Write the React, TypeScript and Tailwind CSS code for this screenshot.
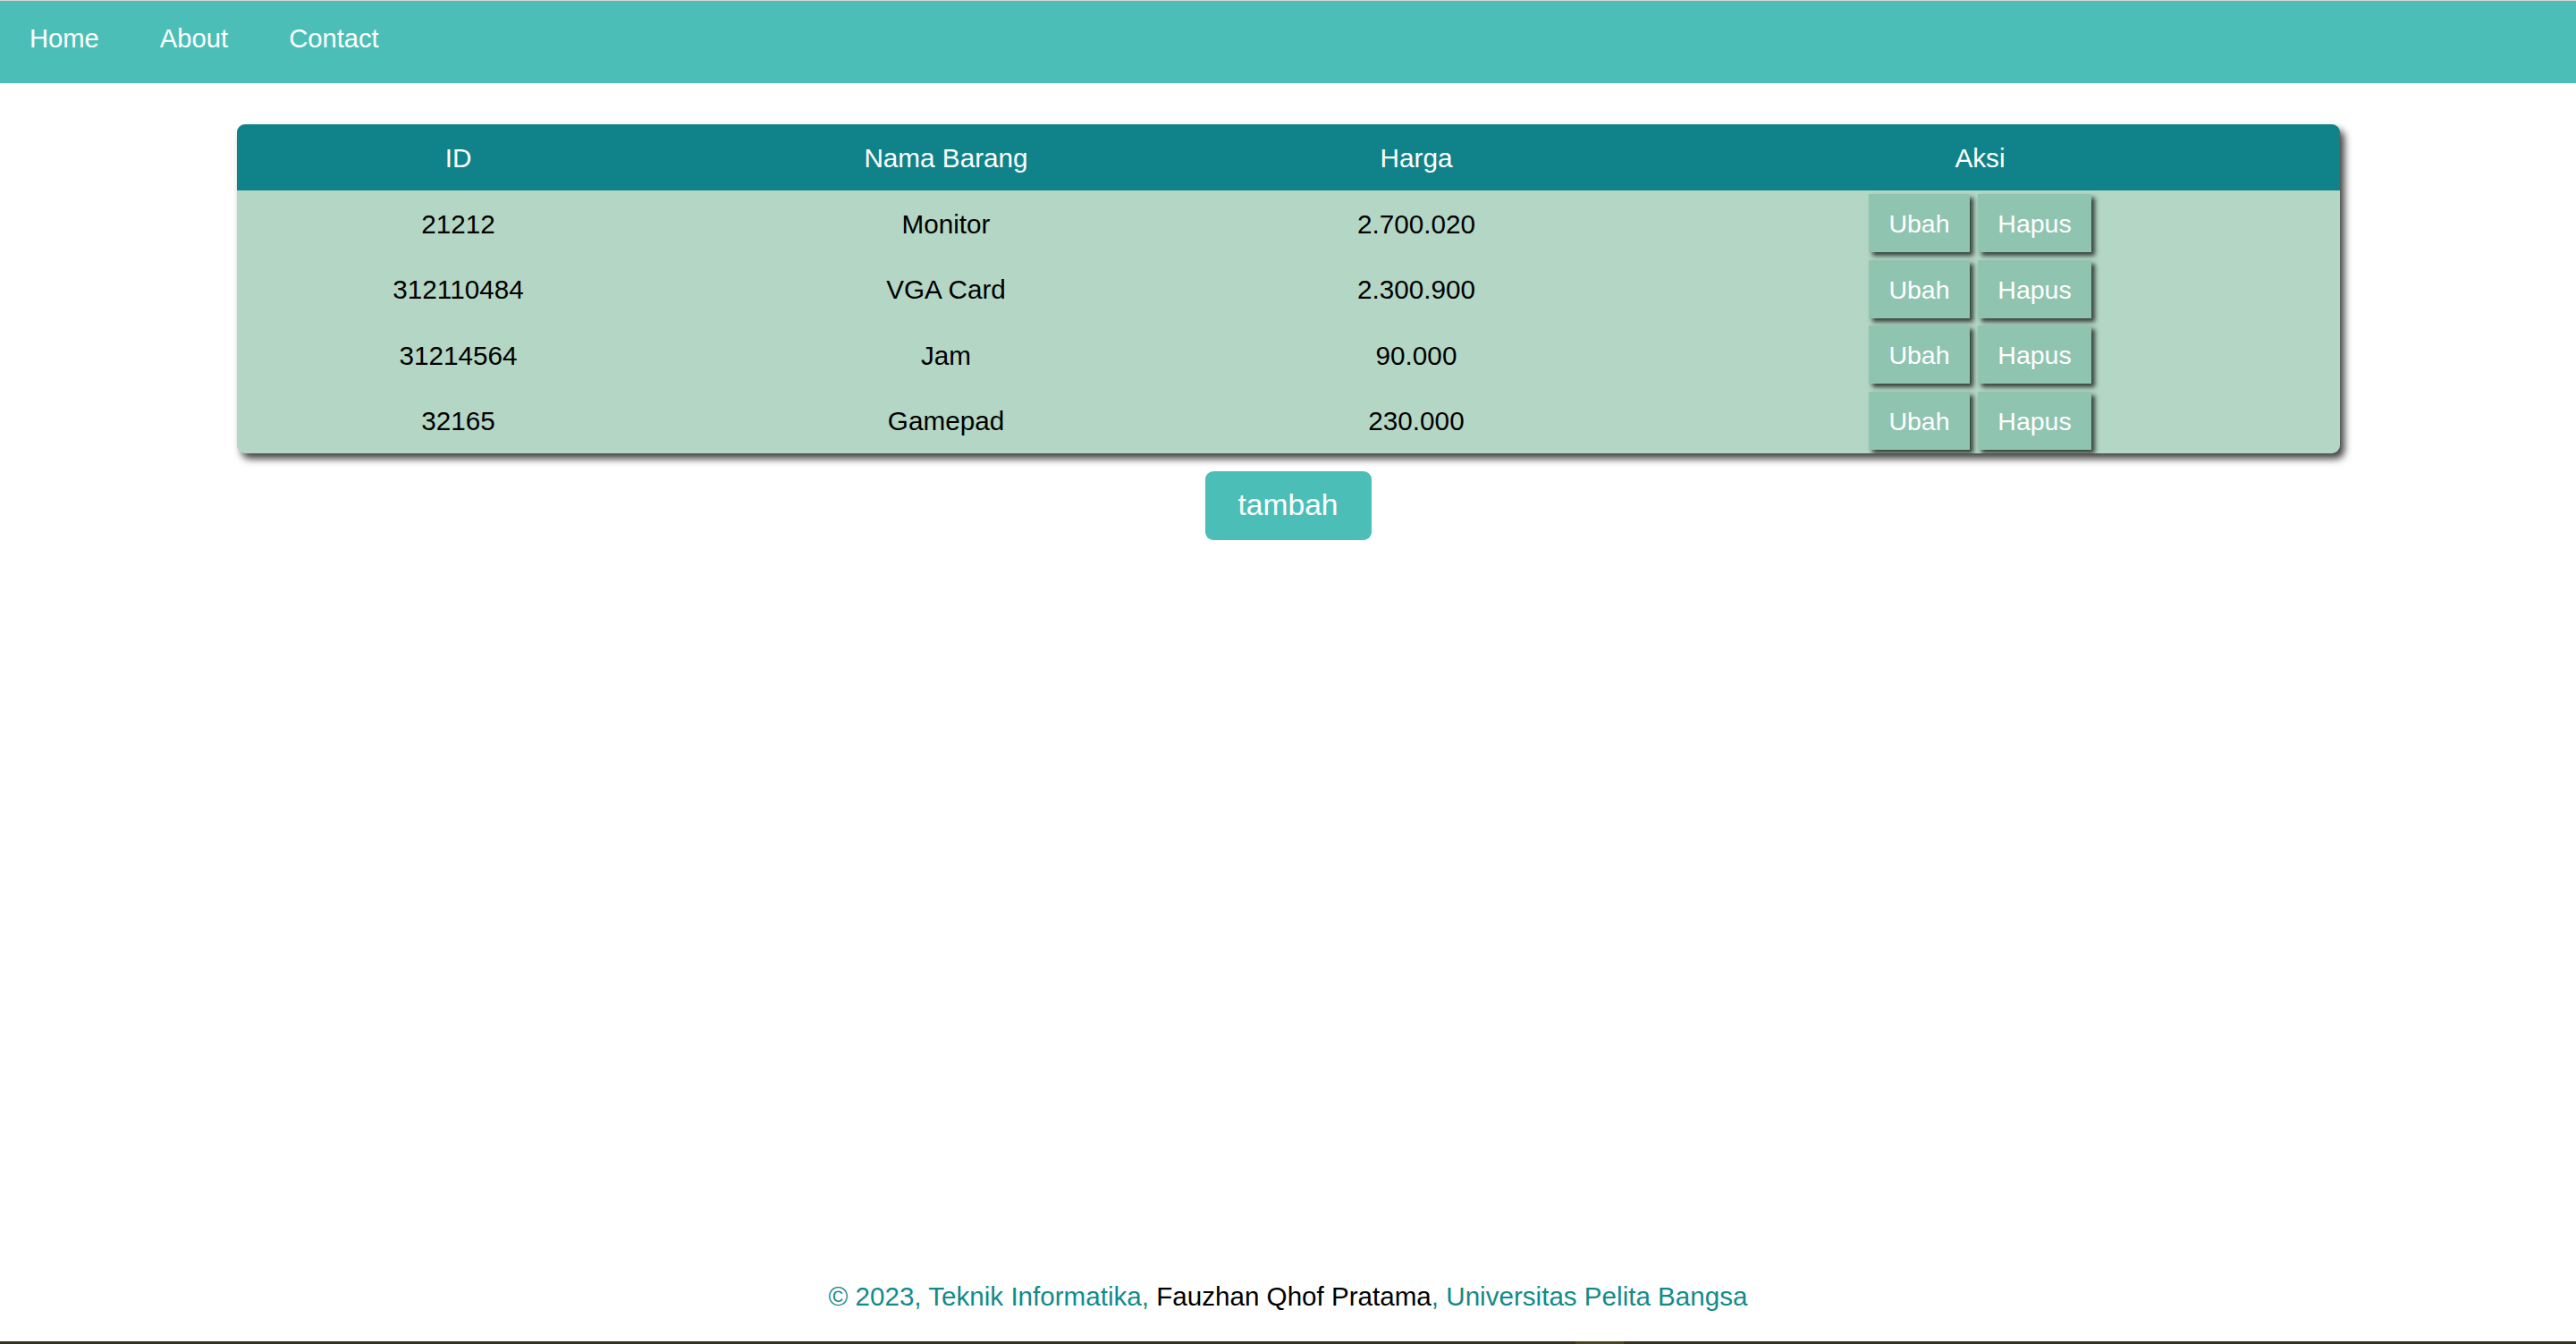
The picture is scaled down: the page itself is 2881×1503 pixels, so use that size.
import React from "react";

type Item = {
  id: string;
  nama: string;
  harga: string;
};

const items: Item[] = [
  { id: "21212", nama: "Monitor", harga: "2.700.020" },
  { id: "312110484", nama: "VGA Card", harga: "2.300.900" },
  { id: "31214564", nama: "Jam", harga: "90.000" },
  { id: "32165", nama: "Gamepad", harga: "230.000" },
];

const cols = "grid grid-cols-[496px_595px_457px_804px]";

export default function App() {
  return (
    <div
      className="h-[1503px] flex flex-col bg-white text-black"
      style={{ fontFamily: '"Liberation Sans", Arial, sans-serif' }}
    >
      {/* Navbar */}
      <nav className="h-[93px] shrink-0 border-t border-[#d6d6d6] bg-[#4bbfb7] pt-[26px] pl-[33px]">
        <ul className="flex gap-[68px] text-[29.2px] leading-[33px] text-white">
          <li>Home</li>
          <li>About</li>
          <li>Contact</li>
        </ul>
      </nav>

      {/* Content */}
      <main className="flex-1 flex flex-col items-center">
        <div className="mt-[46px] w-[2352px] rounded-[9px] overflow-hidden bg-[#b4d6c5] shadow-[5px_6px_9px_rgba(0,0,0,0.75)]">
          <div
            className={`${cols} h-[74px] items-center pt-[3px] bg-[#10838a] text-center text-[29.7px] text-white`}
          >
            <div>ID</div>
            <div>Nama Barang</div>
            <div>Harga</div>
            <div>Aksi</div>
          </div>
          {items.map((item) => (
            <div
              key={item.id}
              className={`${cols} h-[73.5px] items-center text-center text-[29.7px]`}
            >
              <div className="pt-[3px]">{item.id}</div>
              <div className="pt-[3px]">{item.nama}</div>
              <div className="pt-[3px]">{item.harga}</div>
              <div className="flex justify-center gap-[9px]">
                <button className="w-[113px] h-[65px] pt-[2px] bg-[#8fc4b0] text-[28.5px] text-white shadow-[4px_4px_5px_rgba(0,0,0,0.7)]">
                  Ubah
                </button>
                <button className="w-[127px] h-[65px] pt-[2px] bg-[#8fc4b0] text-[28.5px] text-white shadow-[4px_4px_5px_rgba(0,0,0,0.7)]">
                  Hapus
                </button>
              </div>
            </div>
          ))}
        </div>

        <button className="mt-[20px] w-[186px] h-[77px] rounded-[9px] bg-[#4bbfb7] text-[33.6px] text-white">
          tambah
        </button>
      </main>

      {/* Footer */}
      <footer className="pb-[34px] text-center text-[29.6px] leading-[33px] text-[#138a8b]">
        © 2023, Teknik Informatika,{" "}
        <span className="text-black">Fauzhan Qhof Pratama</span>, Universitas
        Pelita Bangsa
      </footer>
      <div className="h-[3px] shrink-0 bg-[#35311f] flex">
        <div className="ml-[1762px] w-[54px] bg-[#4a4420]" />
      </div>
    </div>
  );
}
